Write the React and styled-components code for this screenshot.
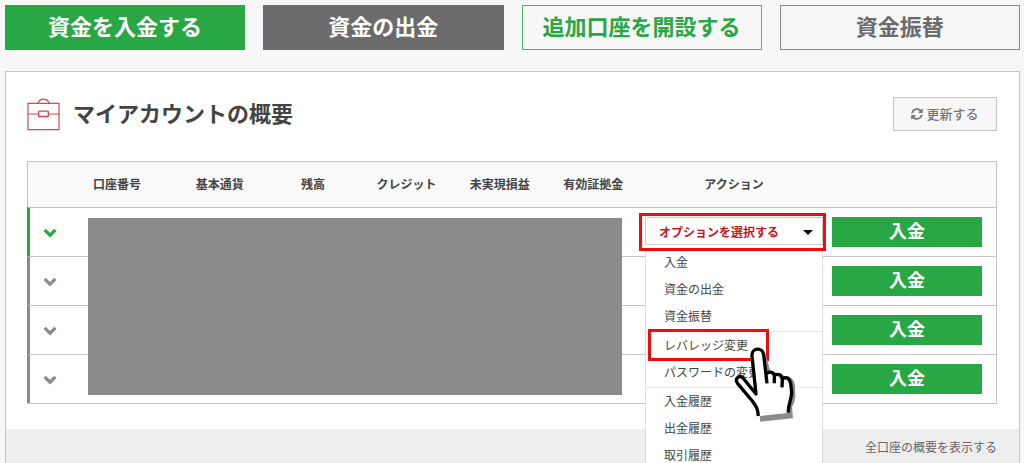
import React from "react";
import styled, { createGlobalStyle } from "styled-components";
import { FaSyncAlt } from "react-icons/fa";

const columns = [
  "口座番号",
  "基本通貨",
  "残高",
  "クレジット",
  "未実現損益",
  "有効証拠金",
];

const menuGroups = [
  ["入金", "資金の出金", "資金振替"],
  ["レバレッジ変更", "パスワードの変更"],
  ["入金履歴", "出金履歴", "取引履歴"],
];

const rows = [
  { id: 1, active: true },
  { id: 2, active: false },
  { id: 3, active: false },
  { id: 4, active: false },
];

function BriefcaseIcon() {
  return (
    <svg width="33" height="33" viewBox="0 0 34 34" fill="none" stroke="#d8434e" aria-hidden="true">
      <path d="M1 5.5h32v27H1zM1 16.5h11M22 16.5h11" strokeWidth="1.2" />
      <rect x="12" y="13.5" width="10" height="5.5" rx="0.8" strokeWidth="1.5" />
      <path d="M11 5.2C12.5 2.4 14.5 1.2 17 1.2s4.500 1.200 6 4" strokeWidth="1.4" />
    </svg>
  );
}

function ChevronIcon() {
  return (
    <svg width="14" height="10" viewBox="0 0 14 10" fill="none" stroke="currentColor" aria-hidden="true">
      <path d="M1.600 1.800L7 7.200l5.400-5.400" strokeWidth="3.2" />
    </svg>
  );
}

function HandIcon() {
  return (
    <svg width="64" height="77" viewBox="40 48 192 231" aria-hidden="true">
      <path
        d="M138 72L152 124Q164 122 172 131Q186 128 194 139Q222 138 226 166L227 200Q226 216 217 232L220 265L122 275L120 258L150 250L206 240L200 160L140 130Z"
        fill="#8b8b8b"
      />
      <path
        d="M116 256C114 232 108 228 98 213L54 161C44 147 58 133 70 144L109 192L97 78C95 52 129 50 132 74L142 130Q157 121 164 135Q181 127 188 146Q208 136 213 161L216 186C216 210 205 220 206 248L205 249L118 258Z"
        fill="#fff"
      />
      <path
        d="M116 258C114 232 108 228 98 213L54 161C44 147 58 133 70 144L109 192L97 78C95 52 129 50 132 74L142 160M142 130Q158 121 164 136V160M164 136Q183 127 188 148L187 172M188 146Q208 136 213 161L216 186C216 210 205 220 206 248"
        fill="none"
        stroke="#000"
        strokeWidth="10"
        strokeLinejoin="round"
      />
    </svg>
  );
}

function OptionMenu() {
  return (
    <Menu>
      {menuGroups.map((group) => (
        <li key={group[0]}>
          <MenuGroup>
            {group.map((label) => (
              <MenuItem key={label}>
                <MenuLink href="#">{label}</MenuLink>
                {label === "レバレッジ変更" && (
                  <>
                    <Highlight />
                    <Pointer>
                      <HandIcon />
                    </Pointer>
                  </>
                )}
              </MenuItem>
            ))}
          </MenuGroup>
        </li>
      ))}
    </Menu>
  );
}

function AccountTable() {
  return (
    <TableWrap>
      <Table>
        <colgroup>
          <Col $width={34} />
          <Col $width={112} />
          <Col />
          <Col />
          <Col />
          <Col />
          <Col />
          <Col $width={188} />
          <Col $width={168} />
        </colgroup>
        <thead>
          <tr>
            <Th aria-label="詳細" />
            {columns.map((name) => (
              <Th key={name}>{name}</Th>
            ))}
            <Th>アクション</Th>
            <Th aria-label="入金" />
          </tr>
        </thead>
        <tbody>
          {rows.map((row) => (
            <Row key={row.id}>
              <ToggleCell $active={row.active}>
                <Toggle type="button" aria-label="詳細を開く" $active={row.active}>
                  <ChevronIcon />
                </Toggle>
              </ToggleCell>
              {columns.map((name) => (
                <Cell key={name} />
              ))}
              <Cell>
                {row.active && (
                  <Dropdown>
                    <Select aria-label="アクション">
                      <option>オプションを選択する</option>
                    </Select>
                    <Caret />
                    <OptionMenu />
                  </Dropdown>
                )}
              </Cell>
              <DepositCell>
                <Deposit type="button">入金</Deposit>
              </DepositCell>
            </Row>
          ))}
        </tbody>
      </Table>
      <Mask />
    </TableWrap>
  );
}

export default function App() {
  return (
    <Page>
      <GlobalStyle />
      <Tabs>
        <Tab type="button" $bg="#28a745" $line="#28a745" $color="#fff">資金を入金する</Tab>
        <Tab type="button" $bg="#6b6b6d" $line="#6b6b6d" $color="#fff">資金の出金</Tab>
        <Tab type="button" $bg="#f7f7f7" $line="#4cb565" $color="#28a745">追加口座を開設する</Tab>
        <Tab type="button" $bg="#f7f7f7" $line="#8a8a8a" $color="#6b6b6b">資金振替</Tab>
      </Tabs>
      <Panel>
        <PanelBody>
          <PanelHead>
            <BriefcaseIcon />
            <Title>マイアカウントの概要</Title>
            <Refresh type="button">
              <FaSyncAlt size={12} />
              <span>更新する</span>
            </Refresh>
          </PanelHead>
          <AccountTable />
        </PanelBody>
        <PanelFooter>
          <FooterLink href="#">全口座の概要を表示する</FooterLink>
        </PanelFooter>
      </Panel>
    </Page>
  );
}

const GlobalStyle = createGlobalStyle`
  * {
    box-sizing: border-box;
  }

  body {
    margin: 0;
    background: #f7f7f7;
    color: #444;
    font-family: "Noto Sans CJK JP", sans-serif;
    font-size: 12px;
    overflow-x: hidden;
    scrollbar-width: none;
  }

  button, select {
    font-family: inherit;
    margin: 0;
    cursor: pointer;
  }
`;

const Page = styled.div`
  padding: 5px 4px 0 5px;
`;

const Tabs = styled.div`
  display: grid;
  grid-template-columns: repeat(4, 1fr);
  gap: 18px;
  margin-bottom: 21px;
`;

const Tab = styled.button`
  height: 45px;
  padding: 0 0 5px;
  border: 1px solid ${({ $line }) => $line};
  background: ${({ $bg }) => $bg};
  color: ${({ $color }) => $color};
  font-size: 22px;
  font-weight: 700;
  line-height: 30px;
`;

const Panel = styled.section`
  border: 1px solid #c6c6c6;
  background: #fff;
`;

const PanelBody = styled.div`
  padding: 25px 22px 25px 21px;
`;

const PanelHead = styled.header`
  display: flex;
  align-items: center;
  gap: 13px;
  height: 34px;
  margin-bottom: 30px;
`;

const Title = styled.h1`
  flex: 1;
  margin: 0;
  padding-bottom: 4px;
  font-size: 22px;
  font-weight: 700;
  line-height: 30px;
`;

const Refresh = styled.button`
  display: flex;
  align-items: center;
  justify-content: center;
  gap: 3px;
  width: 104px;
  height: 34px;
  padding: 0;
  border: 1px solid #c6c6c6;
  background: #f7f7f7;
  color: #777;
  font-size: 13px;
  font-weight: 500;

  span {
    padding-bottom: 2px;
  }
`;

const TableWrap = styled.div`
  position: relative;
`;

const Table = styled.table`
  width: 100%;
  border: 1px solid #c4c4c4;
  border-left: 0;
  border-spacing: 0;
  table-layout: fixed;
`;

const Col = styled.col`
  width: ${({ $width }) => ($width ? `${$width}px` : "auto")};
`;

const Th = styled.th`
  height: 45px;
  padding: 0 0 2px;
  background: #f9f9f9;
  font-size: 12px;
  font-weight: 700;

  &:first-child {
    border-left: 1px solid #c4c4c4;
  }
`;

const Row = styled.tr`
  height: 49px;
`;

const Cell = styled.td`
  padding: 0;
  border-top: 1px solid #c4c4c4;
`;

const ToggleCell = styled(Cell)`
  border-left: 3px solid ${({ $active }) => ($active ? "#28a745" : "#8b8b8b")};
`;

const Toggle = styled.button`
  display: flex;
  padding: 6px 0 4px 13px;
  border: 0;
  background: none;
  color: ${({ $active }) => ($active ? "#28a745" : "#8b8b8b")};
`;

const Dropdown = styled.div`
  position: relative;
  height: 38px;
  margin: 0 2px 0 -1px;
  padding: 4px 3px 6px 6px;
  background: #fff;

  /* red frame, drawn over the top edge of the open menu */
  &::after {
    content: "";
    position: absolute;
    z-index: 3;
    inset: 0;
    border: 3px solid #f80808;
    pointer-events: none;
  }
`;

const Select = styled.select`
  display: block;
  width: 100%;
  height: 28px;
  padding: 0 0 0 13px;
  appearance: none;
  border: 1px solid #ccc;
  border-radius: 0;
  background: #fff;
  color: #c9151e;
  font-size: 12px;
  font-weight: 700;
`;

const Caret = styled.span`
  position: absolute;
  top: 17px;
  right: 13px;
  border: 5px solid transparent;
  border-top-color: #000;
  border-bottom: 0;
  pointer-events: none;
`;

const Menu = styled.ul`
  position: absolute;
  z-index: 2;
  top: 37px;
  left: 6px;
  right: 3px;
  margin: 0;
  padding: 0;
  border: 1px solid #ddd;
  border-top: 0;
  background: #fff;
  list-style: none;

  li + li > ul {
    padding-top: 1px;
    border-top: 1px solid #e6eaea;
  }
`;

const MenuGroup = styled.ul`
  margin: 0;
  padding: 0;
  list-style: none;
`;

const MenuItem = styled.li`
  position: relative;
  height: 27px;
`;

const MenuLink = styled.a`
  display: block;
  padding-left: 18px;
  color: #444;
  font-size: 12px;
  line-height: 23px;
  text-decoration: none;
`;

const Highlight = styled.span`
  position: absolute;
  top: -4px;
  left: 2px;
  width: 121px;
  height: 32px;
  border: 3px solid #f80808;
  pointer-events: none;
`;

const Pointer = styled.span`
  position: absolute;
  z-index: 1;
  top: 13px;
  left: 87px;
  pointer-events: none;

  svg {
    display: block;
  }
`;

const DepositCell = styled(Cell)`
  padding: 0 14px 0 4px;
`;

const Deposit = styled.button`
  display: block;
  width: 100%;
  height: 30px;
  padding: 0 0 4px;
  border: 0;
  background: #28a745;
  color: #fff;
  font-size: 18px;
  font-weight: 700;
  line-height: 24px;
`;

/* covers the account figures */
const Mask = styled.div`
  position: absolute;
  top: 57px;
  bottom: 9px;
  left: 61px;
  right: 375px;
  background: #8b8b8b;
`;

const PanelFooter = styled.footer`
  height: 40px;
  padding-right: 22px;
  background: #eee;
  text-align: right;
`;

const FooterLink = styled.a`
  color: #666;
  font-size: 12px;
  line-height: 36px;
  text-decoration: none;
`;
